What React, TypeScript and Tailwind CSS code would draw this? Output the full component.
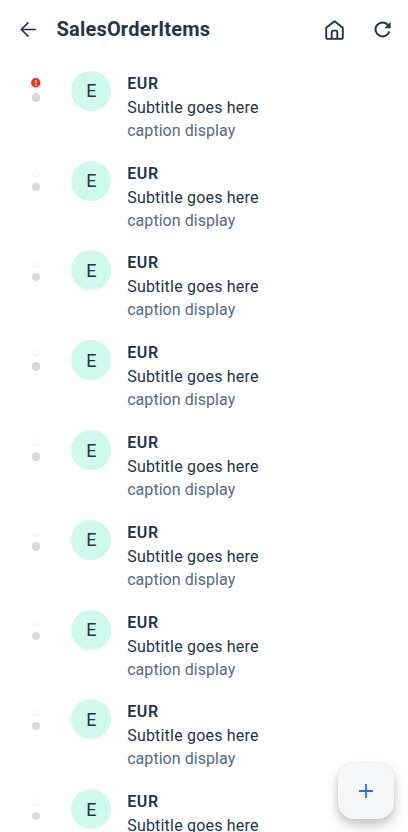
function Status({ error }: { error: boolean }) {
  return (
    <div className="ml-[31px] mt-[18px] flex w-[10px] shrink-0 flex-col items-center gap-[5.5px]">
      {error ? (
        <svg className="h-[9.5px] w-[9.5px] shrink-0" viewBox="0 0 10 10">
          <circle cx="5" cy="5" r="5" fill="#ee3424" />
          <path d="M5 2v3.5M5 6.7v1.4" stroke="#fff" strokeWidth="1.4" />
        </svg>
      ) : (
        <svg className="h-[9.5px] w-[9.5px] shrink-0" viewBox="0 0 10 10">
          <circle cx="5" cy="5" r="4.5" fill="#fdfdfd" />
          <path d="M.8 6.7a4.5 4.5 0 0 0 8.4 0" fill="none" stroke="#e9e9e9" strokeWidth=".8" />
        </svg>
      )}
      <div className="h-[8.5px] w-[8.5px] shrink-0 rounded-full bg-[#d5dadd]" />
    </div>
  );
}

function Item({ error }: { error: boolean }) {
  return (
    <li className="flex h-[89.83px] shrink-0 items-start text-[#223548]">
      <Status error={error} />
      <div className="ml-[30.4px] mt-[10.7px] flex h-10 w-10 shrink-0 items-center justify-center rounded-full bg-[#cef9ec] text-[18px]">
        E
      </div>
      <div className="ml-[15.8px] mt-[11.7px] whitespace-nowrap text-[16px]">
        <div className="h-6 font-semibold leading-6 tracking-[0.6px]">EUR</div>
        <div className="h-[23px] leading-6 tracking-[0.2px]">Subtitle goes here</div>
        <div className="leading-6 tracking-[0.05px] text-[#556b82]">caption display</div>
      </div>
    </li>
  );
}

export default function App() {
  return (
    <div className="relative flex h-[832px] w-[408px] flex-col overflow-hidden bg-white font-[Roboto,sans-serif]">
      <header className="flex h-[60px] shrink-0 items-center text-[#223548]">
        <svg className="mb-[2px] ml-[20px] h-[17px] w-[17px]" viewBox="0 0 17 17" fill="none" stroke="currentColor" strokeWidth="1.7" strokeLinecap="round" strokeLinejoin="round">
          <path d="M15.4 8.5H1.5M8 1.9 1.3 8.5 8 15.2" />
        </svg>
        <h1 className="mb-[2px] ml-[19.5px] w-[160px] text-[20px] font-bold leading-7 tracking-[0.2px]">SalesOrderItems</h1>
        <svg className="mb-[1px] ml-[108.5px] h-5 w-[19px]" viewBox="0 0 19 20" fill="none" stroke="currentColor" strokeWidth="1.9" strokeLinejoin="round">
          <path d="M9.5 1.2 1.2 7.8v9.5q0 1.6 1.6 1.6h13.4q1.6 0 1.6-1.6V7.8ZM6.7 18.7v-6.8q0-1.3 1.3-1.3h3q1.3 0 1.3 1.3v6.8" />
        </svg>
        <svg className="mb-[2px] ml-[30px] h-[17px] w-[17px]" viewBox="0 0 17 17" fill="none" stroke="currentColor" strokeWidth="2" strokeLinecap="round">
          <path d="M15 11.1A7 7 0 1 1 13.5 3.5" />
          <path d="M16.6.9v6.4h-6.3Z" fill="currentColor" stroke="none" />
        </svg>
      </header>
      <ul className="flex flex-col">
        {Array.from({ length: 9 }, (_, i) => (
          <Item key={i} error={i === 0} />
        ))}
      </ul>
      <button aria-label="Add" className="absolute left-[338px] top-[763px] flex h-14 w-14 items-center justify-center rounded-[16px] bg-[#f5f6f7] shadow-[0_6px_12px_rgba(0,0,0,0.24),0_0_3px_rgba(0,0,0,0.08)]">
        <svg className="h-[14px] w-[14px]" viewBox="0 0 14 14" stroke="#2b6af0" strokeWidth="1.8" strokeLinecap="round">
          <path d="M7 .7v12.6M.7 7h12.6" />
        </svg>
      </button>
    </div>
  );
}
